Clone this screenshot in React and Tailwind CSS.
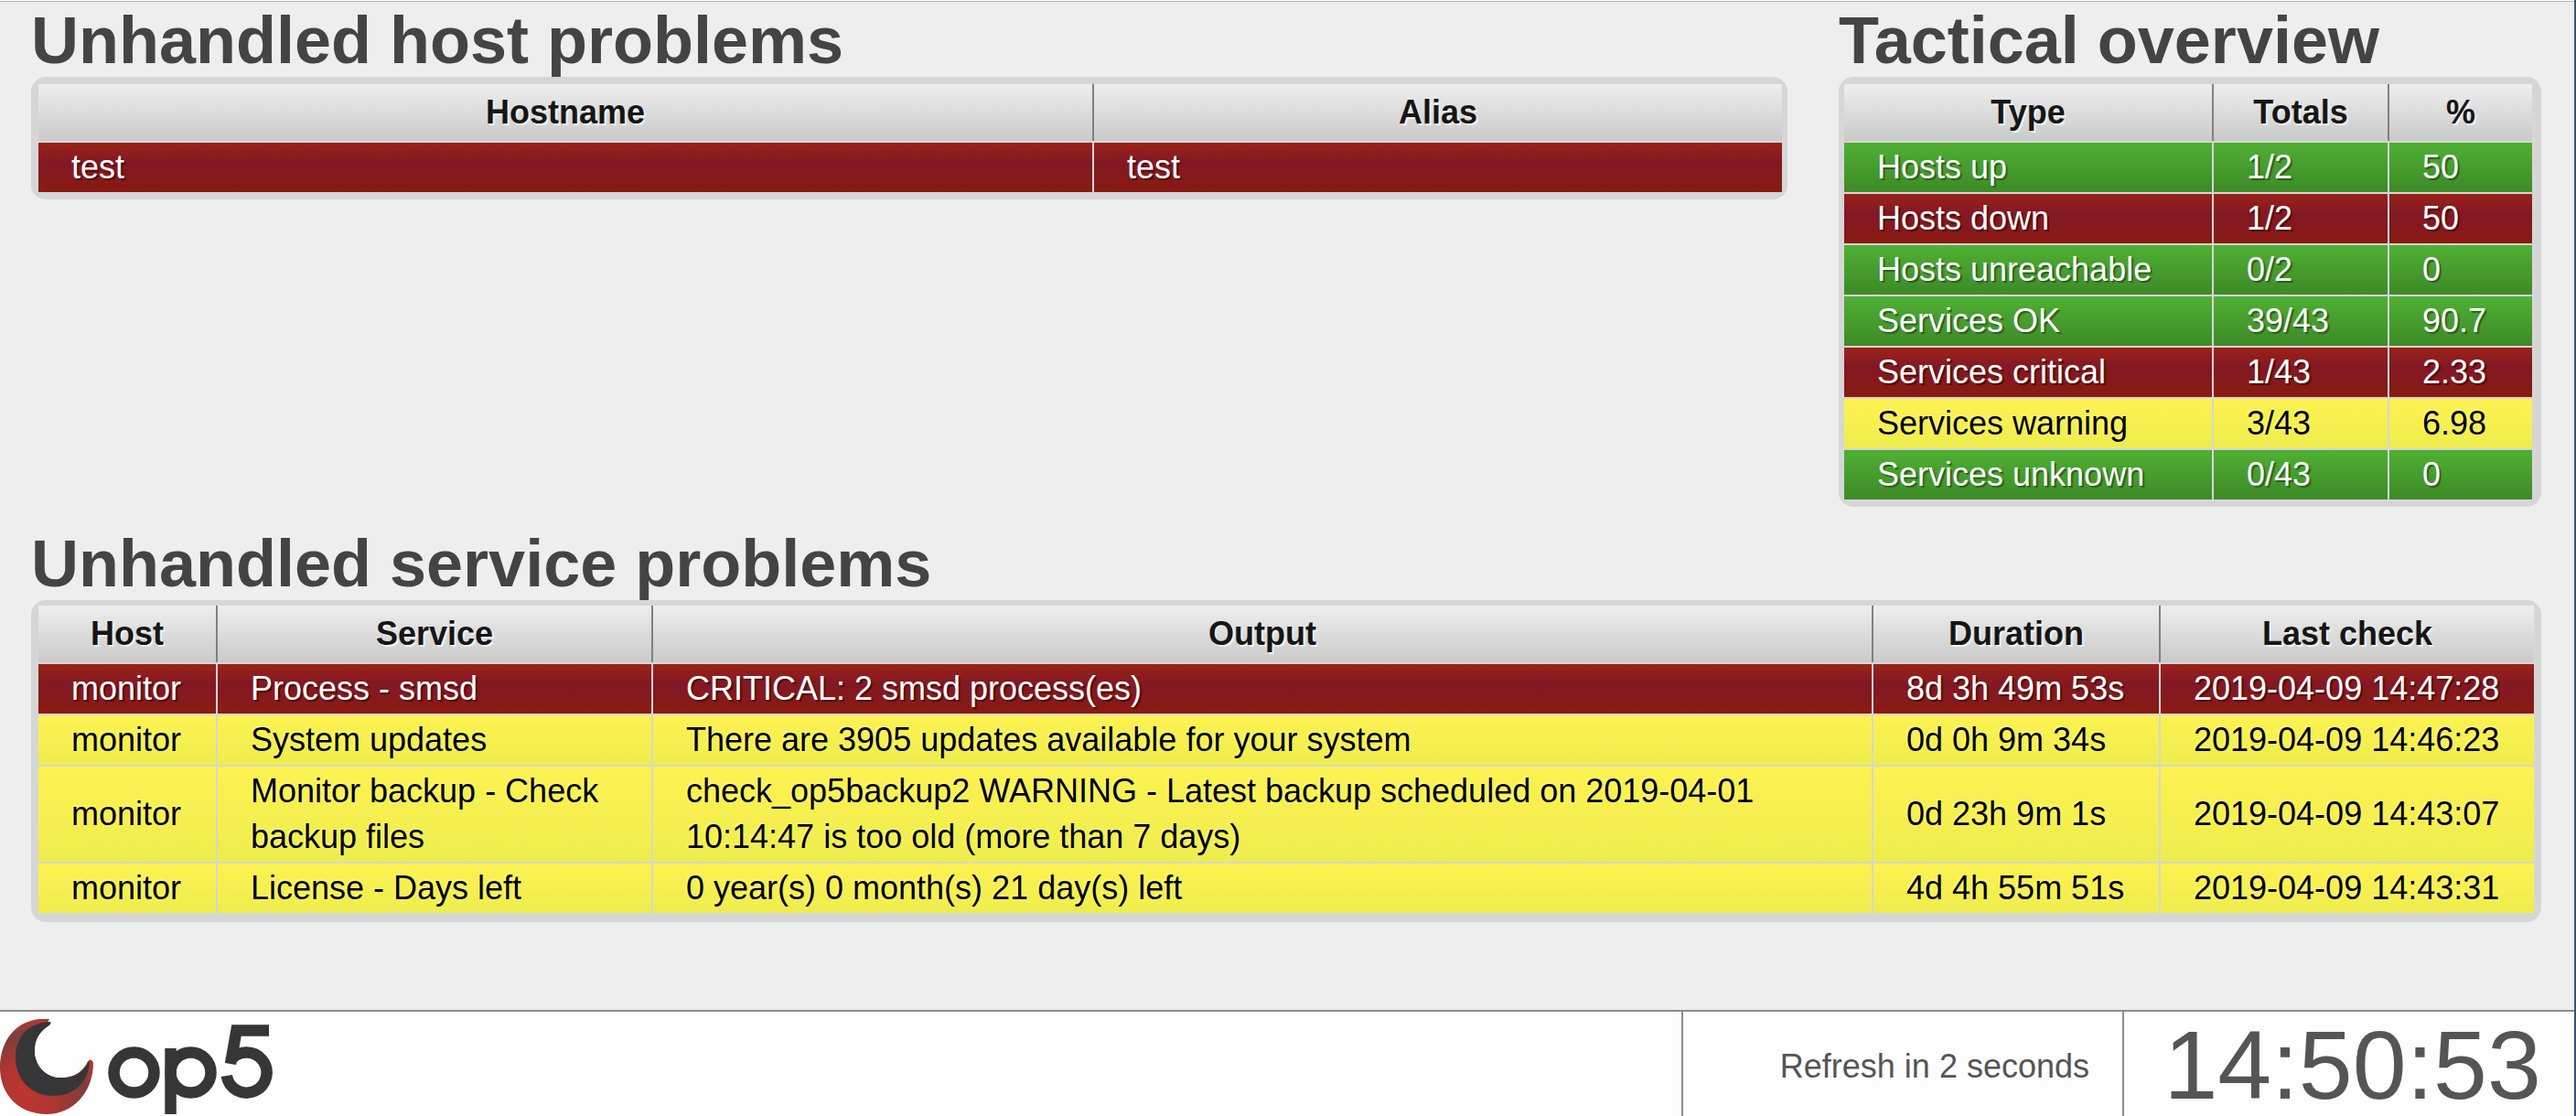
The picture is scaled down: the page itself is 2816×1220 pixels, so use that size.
const ROW = {
  ok: "bg-linear-to-b from-[#4fb033] to-[#3d8a27] text-white [text-shadow:2px_2px_1px_#2a5f1b]",
  critical: "bg-linear-to-b from-[#9c2217] via-[#821823] via-40% to-[#8a1a10] text-white [text-shadow:2px_2px_1px_#4d0c08]",
  warning: "bg-linear-to-b from-[#fdf251] to-[#eeed4e] text-black [text-shadow:-1px_-1px_2px_#ffff99]",
};

const HEAD =
  "h-[62px] border-r-2 border-[#808080] bg-linear-to-b from-[#eeeeee] to-[#cacaca] p-0 text-center font-bold leading-[50px] text-[#161616] [text-shadow:2px_2px_1px_#f2f2f2] last:border-r-0";
const CELL = "border-r-2 border-[#d6d6d6] px-9 py-0.5 align-middle last:border-r-0";

function StatusTable({ label, columns, rows, frame }) {
  return (
    <div className={`rounded-2xl bg-[#d6d6d6] ${frame}`}>
      <table
        aria-label={label}
        className="w-full table-fixed border-separate [border-spacing:0_2px] text-left text-[36px] leading-[50px]"
      >
        <colgroup>
          {columns.map((c) => (
            <col key={c.name} className={c.width} />
          ))}
        </colgroup>
        <thead>
          <tr>
            {columns.map((c) => (
              <th key={c.name} scope="col" className={HEAD}>
                {c.name}
              </th>
            ))}
          </tr>
        </thead>
        <tbody>
          {rows.map((r) => (
            <tr key={r.cells.join()}>
              {r.cells.map((text, i) => (
                <td key={i} className={`${CELL} ${ROW[r.state]}`}>
                  {text}
                </td>
              ))}
            </tr>
          ))}
        </tbody>
      </table>
    </div>
  );
}

function Title({ children }) {
  return <h2 className="pt-0.5 text-[72px] leading-[80px] font-bold text-[#444444]">{children}</h2>;
}

const hostColumns = [
  { name: "Hostname", width: "" },
  { name: "Alias", width: "w-[752px]" },
];
const hostRows = [{ state: "critical", cells: ["test", "test"] }];

const tacticalColumns = [
  { name: "Type", width: "" },
  { name: "Totals", width: "w-[192px]" },
  { name: "%", width: "w-[156px]" },
];
const tacticalRows = [
  { state: "ok", cells: ["Hosts up", "1/2", "50"] },
  { state: "critical", cells: ["Hosts down", "1/2", "50"] },
  { state: "ok", cells: ["Hosts unreachable", "0/2", "0"] },
  { state: "ok", cells: ["Services OK", "39/43", "90.7"] },
  { state: "critical", cells: ["Services critical", "1/43", "2.33"] },
  { state: "warning", cells: ["Services warning", "3/43", "6.98"] },
  { state: "ok", cells: ["Services unknown", "0/43", "0"] },
];

const serviceColumns = [
  { name: "Host", width: "w-[196px]" },
  { name: "Service", width: "w-[476px]" },
  { name: "Output", width: "" },
  { name: "Duration", width: "w-[314px]" },
  { name: "Last check", width: "w-[408px]" },
];
const serviceRows = [
  {
    state: "critical",
    cells: ["monitor", "Process - smsd", "CRITICAL: 2 smsd process(es)", "8d 3h 49m 53s", "2019-04-09 14:47:28"],
  },
  {
    state: "warning",
    cells: [
      "monitor",
      "System updates",
      "There are 3905 updates available for your system",
      "0d 0h 9m 34s",
      "2019-04-09 14:46:23",
    ],
  },
  {
    state: "warning",
    cells: [
      "monitor",
      "Monitor backup - Check backup files",
      "check_op5backup2 WARNING - Latest backup scheduled on 2019-04-01 10:14:47 is too old (more than 7 days)",
      "0d 23h 9m 1s",
      "2019-04-09 14:43:07",
    ],
  },
  {
    state: "warning",
    cells: [
      "monitor",
      "License - Days left",
      "0 year(s) 0 month(s) 21 day(s) left",
      "4d 4h 55m 51s",
      "2019-04-09 14:43:31",
    ],
  },
];

function Logo() {
  return (
    <svg viewBox="0 0 300 104" className="mt-2 h-[104px] w-[300px]" role="img" aria-label="op5">
      <defs>
        <radialGradient id="ember" gradientUnits="userSpaceOnUse" cx="28" cy="82" r="82">
          <stop offset="0" stopColor="#bd3730" />
          <stop offset="0.4" stopColor="#ad3531" />
          <stop offset="0.8" stopColor="#7c3f3a" />
          <stop offset="0.95" stopColor="#a83a38" />
          <stop offset="1" stopColor="#b83330" />
        </radialGradient>
      </defs>
      <path
        d="M54 0H44C17 2 0 24 0 53C0 83 21 104 51 104C80 104 102 80 102 48Q100 42 96 46L60 72L30 50Z"
        fill="url(#ember)"
      />
      <path
        d="M55 3C30 4 17 20 17 42C17 67 35 84 58 84C82 84 97 68 98 46C91 57 82 64 67 64C50 64 38 51 38 34C38 22 44 13 54 7Q57 4 55 3Z"
        fill="#363638"
      />
      <path
        d="M55 3Q57 4 54 7C44 13 38 22 38 34C38 51 50 64 67 64C82 64 91 57 96 46L102 30L80 0Z"
        fill="#fdfdfd"
      />
      <g fill="none" stroke="#363638" strokeWidth="12.5">
        <circle cx="146.500" cy="58.500" r="22" />
        <circle cx="208.500" cy="58.500" r="22" />
        <path d="M186.500 32V104" />
        <path d="M294 12.500H258.500L252 49" />
        <path d="M251.500 46A22 22 0 1 1 247.800 62" />
      </g>
    </svg>
  );
}

export default function App() {
  return (
    <div className="flex min-h-screen flex-col border-r-2 border-[#3d4f73] bg-[#eeeeee] font-['Liberation_Sans',Arial,sans-serif]">
      <div className="h-0.5 border-b border-[#b0b5b2] bg-white" />
      <main className="flex-1 pr-9 pl-[34px]">
        <div className="flex items-start gap-14">
          <section className="flex-1">
            <Title>Unhandled host problems</Title>
            <StatusTable label="Unhandled host problems" columns={hostColumns} rows={hostRows} frame="py-1.5 pr-1.5 pl-2" />
          </section>
          <section className="w-[768px]">
            <Title>Tactical overview</Title>
            <StatusTable label="Tactical overview" columns={tacticalColumns} rows={tacticalRows} frame="py-1.5 pr-2.5 pl-1.5" />
          </section>
        </div>
        <section className="mt-5">
          <Title>Unhandled service problems</Title>
          <StatusTable label="Unhandled service problems" columns={serviceColumns} rows={serviceRows} frame="pt-1 pr-2 pb-2 pl-2" />
        </section>
      </main>
      <footer className="flex h-[116px] border-t-2 border-[#8c8c8c] bg-[#fdfdfd] text-[#555555]">
        <div className="flex-1">
          <Logo />
        </div>
        <div className="flex w-[482px] items-center justify-end border-l-2 border-[#8c8c8c] pt-1.5 pr-9 text-[36px]">
          Refresh in 2 seconds
        </div>
        <time className="flex w-[494px] items-center justify-end border-l-2 border-[#8c8c8c] pt-0.5 pr-9 text-[106px] leading-none">
          14:50:53
        </time>
      </footer>
    </div>
  );
}
